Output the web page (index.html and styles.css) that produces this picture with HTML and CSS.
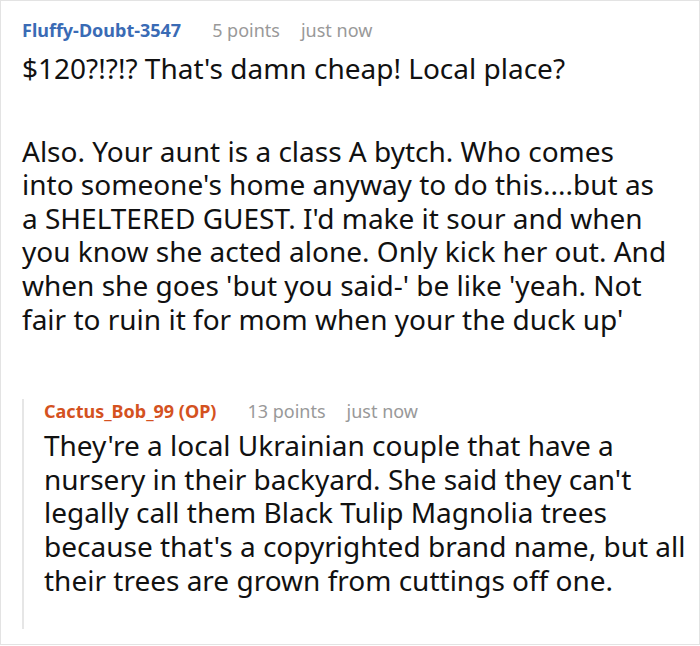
FILE: index.html
```html
<!DOCTYPE html>
<html>
<head>
<meta charset="utf-8">
<link rel="stylesheet" href="styles.css">
</head>
<body>
<div class="frame">
  <div class="comment">
    <div class="meta">
      <span class="author">Fluffy-Doubt-3547</span>
      <span class="points">5 points</span>
      <span class="time">just now</span>
    </div>
    <div class="body">
      <p>$120?!?!? That's damn cheap! Local place?</p>
      <p>Also. Your aunt is a class A bytch. Who comes<br>into someone's home anyway to do this....but as<br>a SHELTERED GUEST. I'd make it sour and when<br>you know she acted alone. Only kick her out. And<br>when she goes 'but you said-' be like 'yeah. Not<br>fair to ruin it for mom when your the duck up'</p>
    </div>
    <div class="replies">
      <div class="comment reply">
        <div class="meta">
          <span class="author op">Cactus_Bob_99 (OP)</span>
          <span class="points">13 points</span>
          <span class="time">just now</span>
        </div>
        <div class="body">
          <p>They're a local Ukrainian couple that have a<br>nursery in their backyard. She said they can't<br>legally call them Black Tulip Magnolia trees<br>because that's a copyrighted brand name, but all<br>their trees are grown from cuttings off one.</p>
        </div>
      </div>
    </div>
  </div>
</div>
</body>
</html>
```
FILE: styles.css
```css
html, body {
  margin: 0;
  padding: 0;
  background: #fff;
}
.frame {
  width: 700px;
  height: 645px;
  box-sizing: border-box;
  border: 1px solid #e3e3e3;
  overflow: hidden;
  font-family: "Noto Sans", "Open Sans", sans-serif;
  color: #111;
}
.comment {
  padding: 17px 0 0 21px;
}
.meta {
  font-size: 18px;
  line-height: 24px;
  display: flex;
  margin-bottom: 10px;
  white-space: nowrap;
}
.author {
  font-weight: 700;
  color: #3a6bb5;
  margin-right: 31px;
}
.author.op {
  color: #d4521f;
}
.points {
  color: #999;
  margin-right: 21px;
}
.time {
  color: #999;
}
.body {
  font-size: 28px;
  line-height: 33.6px;
  white-space: nowrap;
}
.body p {
  margin: 0;
}
.body p + p {
  margin-top: 49px;
}
.replies {
  margin-top: 63px;
  border-left: 2px solid #e6e6e6;
}
.reply {
  padding: 0 0 32px 20px;
}
.reply .meta {
  margin-bottom: 6px;
}
```
